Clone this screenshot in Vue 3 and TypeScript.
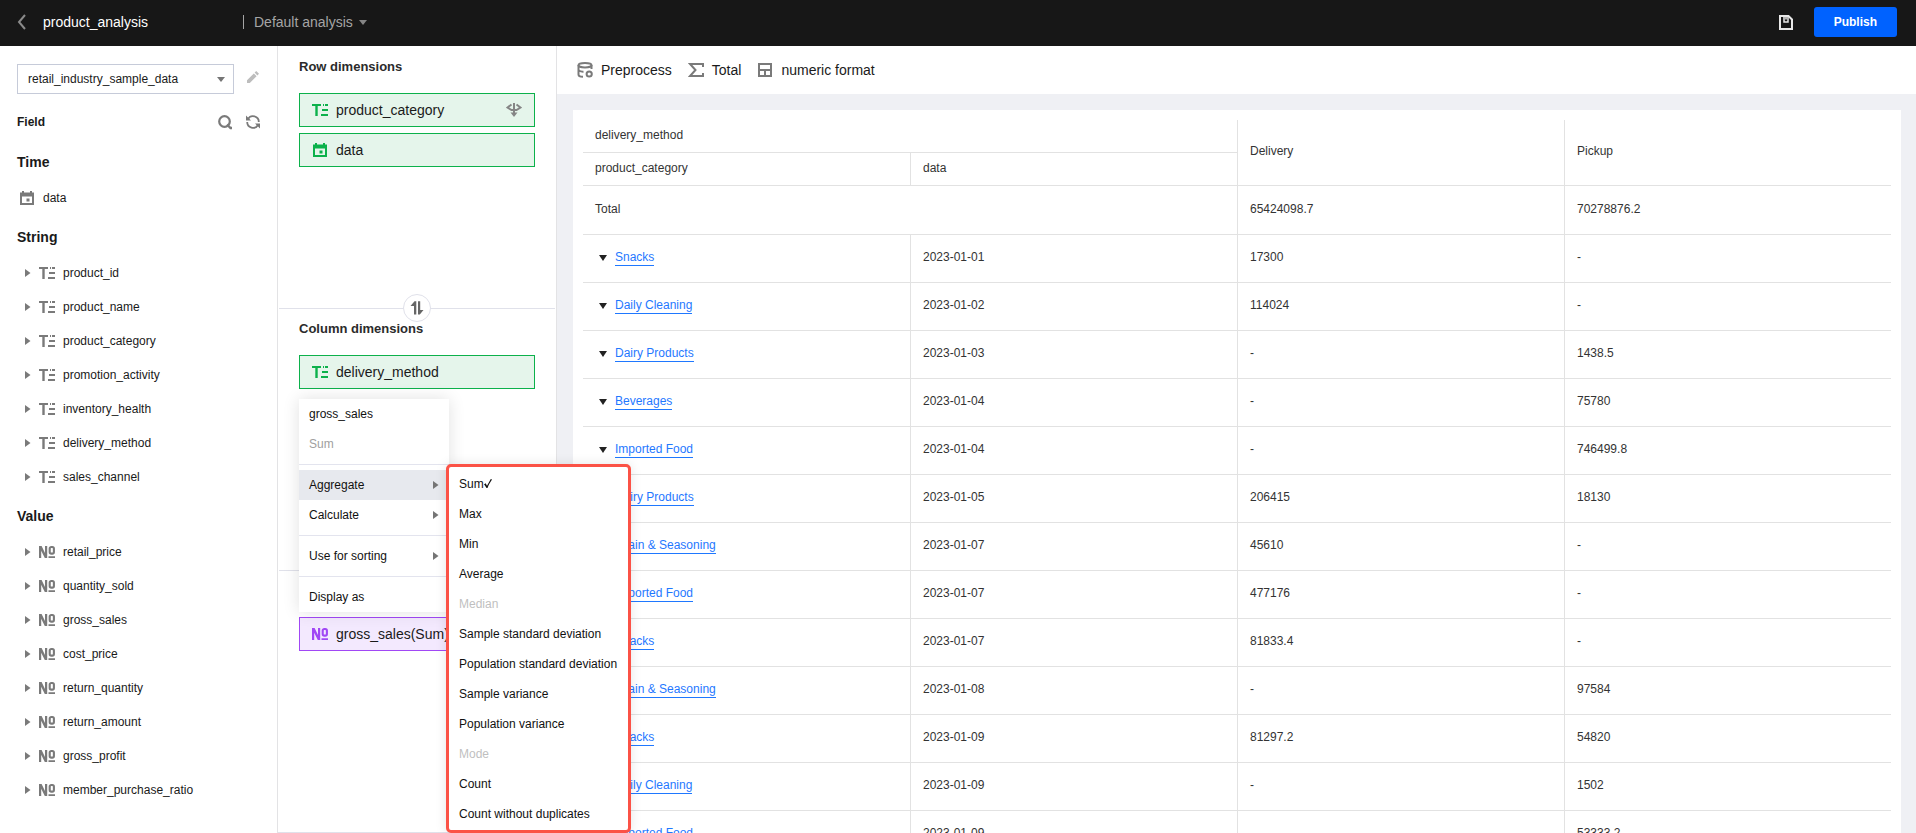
<script setup lang="ts">
import { ref } from 'vue'

interface Row {
  category: string
  date: string
  delivery: string
  pickup: string
}

interface Aggregate {
  label: string
  disabled?: boolean
}

const dataset = ref('retail_industry_sample_data')

const stringFields: string[] = [
  'product_id',
  'product_name',
  'product_category',
  'promotion_activity',
  'inventory_health',
  'delivery_method',
  'sales_channel',
]

const valueFields: string[] = [
  'retail_price',
  'quantity_sold',
  'gross_sales',
  'cost_price',
  'return_quantity',
  'return_amount',
  'gross_profit',
  'member_purchase_ratio',
]

const aggregates: Aggregate[] = [
  { label: 'Sum' },
  { label: 'Max' },
  { label: 'Min' },
  { label: 'Average' },
  { label: 'Median', disabled: true },
  { label: 'Sample standard deviation' },
  { label: 'Population standard deviation' },
  { label: 'Sample variance' },
  { label: 'Population variance' },
  { label: 'Mode', disabled: true },
  { label: 'Count' },
  { label: 'Count without duplicates' },
]
const selected = ref('Sum')

const rows: Row[] = [
  { category: 'Snacks', date: '2023-01-01', delivery: '17300', pickup: '-' },
  { category: 'Daily Cleaning', date: '2023-01-02', delivery: '114024', pickup: '-' },
  { category: 'Dairy Products', date: '2023-01-03', delivery: '-', pickup: '1438.5' },
  { category: 'Beverages', date: '2023-01-04', delivery: '-', pickup: '75780' },
  { category: 'Imported Food', date: '2023-01-04', delivery: '-', pickup: '746499.8' },
  { category: 'Dairy Products', date: '2023-01-05', delivery: '206415', pickup: '18130' },
  { category: 'Grain & Seasoning', date: '2023-01-07', delivery: '45610', pickup: '-' },
  { category: 'Imported Food', date: '2023-01-07', delivery: '477176', pickup: '-' },
  { category: 'Snacks', date: '2023-01-07', delivery: '81833.4', pickup: '-' },
  { category: 'Grain & Seasoning', date: '2023-01-08', delivery: '-', pickup: '97584' },
  { category: 'Snacks', date: '2023-01-09', delivery: '81297.2', pickup: '54820' },
  { category: 'Daily Cleaning', date: '2023-01-09', delivery: '-', pickup: '1502' },
  { category: 'Imported Food', date: '2023-01-09', delivery: '-', pickup: '53333.2' },
]
</script>

<template>
  <div class="app">
    <svg class="sprite" aria-hidden="true">
      <symbol id="i-string" viewBox="0 0 16 16">
        <path d="M0 3h9M11 3h1M13 3h3M10 8h6M9 13h7" fill="none" stroke="currentColor" stroke-width="2" />
        <path d="M4.500 3v11" fill="none" stroke="currentColor" stroke-width="2.400" />
      </symbol>
      <symbol id="i-number" viewBox="0 0 16 16">
        <path d="M0 2h2.600L6 9V2h2.200v12H5.800L2.200 6.800V14H0zM9.500 12.200H16V14H9.500z" fill="currentColor" />
        <rect x="10.700" y="3" width="4.200" height="6.600" rx="1.600" fill="none" stroke="currentColor" stroke-width="2.100" />
      </symbol>
      <symbol id="i-date" viewBox="0 0 16 16">
        <path fill="currentColor" fill-rule="evenodd" d="M3 1h2v1.500h6V1h2v1.500h2V15H1V2.500h2zM3 6.500V13h10V6.500z" />
        <rect x="7.500" y="8.500" width="3" height="3" fill="currentColor" />
      </symbol>
      <symbol id="i-right" viewBox="0 0 6 10"><path d="M0 1l5.500 4L0 9z" fill="currentColor" /></symbol>
      <symbol id="i-down" viewBox="0 0 8 6"><path d="M0 0h8L4 6z" fill="currentColor" /></symbol>
    </svg>

    <header class="topbar">
      <button class="bare back" aria-label="Back">
        <svg width="10" height="16" viewBox="0 0 10 16"><path d="M8 1L2 8l6 7" fill="none" stroke="currentColor" stroke-width="2" /></svg>
      </button>
      <h1 class="title">product_analysis</h1>
      <button class="bare analysis">
        Default analysis
        <svg width="8" height="5" viewBox="0 0 8 5"><path d="M0 0h8L4 5z" fill="currentColor" /></svg>
      </button>
      <button class="bare save" aria-label="Save">
        <svg width="14" height="15" viewBox="0 0 14 15">
          <path d="M1 1h8.500L13 4.500V14H1z" fill="none" stroke="currentColor" stroke-width="2" />
          <path d="M5 1v6h4V1M7 1v3.500" fill="none" stroke="currentColor" stroke-width="1.500" />
        </svg>
      </button>
      <button class="publish">Publish</button>
    </header>

    <div class="body">
      <aside class="fields">
        <div class="source">
          <div class="select">
            <select v-model="dataset" aria-label="Dataset">
              <option>retail_industry_sample_data</option>
            </select>
            <svg width="8" height="5" viewBox="0 0 8 5"><path d="M0 0h8L4 5z" fill="currentColor" /></svg>
          </div>
          <button class="bare edit" aria-label="Edit dataset">
            <svg width="12" height="12" viewBox="0 0 12 12">
              <path d="M0 12V9.200L6.800 2.400l2.800 2.800L2.800 12zM7.600 1.600L9.200 0 12 2.800l-1.600 1.600z" fill="currentColor" />
            </svg>
          </button>
        </div>
        <div class="field-head">
          <h2>Field</h2>
          <button class="bare" aria-label="Search fields">
            <svg width="15" height="15" viewBox="0 0 15 15">
              <circle cx="6.500" cy="6.500" r="5.300" fill="none" stroke="currentColor" stroke-width="2.200" />
              <path d="M9 9.500l3.500 3.500h1.500" fill="none" stroke="currentColor" stroke-width="2.400" />
            </svg>
          </button>
          <button class="bare" aria-label="Refresh fields">
            <svg width="14" height="14" viewBox="0 0 14 14">
              <path d="M2 4A5.800 5.800 0 0 1 12.800 7M12 10A5.800 5.800 0 0 1 1.200 7" fill="none" stroke="currentColor" stroke-width="1.800" />
              <path d="M0 .5v5h5zM14 13.500v-5H9z" fill="currentColor" />
            </svg>
          </button>
        </div>

        <h3>Time</h3>
        <ul>
          <li class="date"><svg width="16" height="16"><use href="#i-date" /></svg>data</li>
        </ul>
        <h3>String</h3>
        <ul>
          <li v-for="f in stringFields" :key="f">
            <button class="bare caret" :aria-label="'Expand ' + f"><svg width="6" height="10"><use href="#i-right" /></svg></button>
            <svg width="16" height="16"><use href="#i-string" /></svg>{{ f }}
          </li>
        </ul>
        <h3>Value</h3>
        <ul>
          <li v-for="f in valueFields" :key="f">
            <button class="bare caret" :aria-label="'Expand ' + f"><svg width="6" height="10"><use href="#i-right" /></svg></button>
            <svg width="16" height="16"><use href="#i-number" /></svg>{{ f }}
          </li>
        </ul>
      </aside>

      <section class="shelves">
        <div class="shelf">
          <h2>Row dimensions</h2>
          <div class="chip">
            <svg width="16" height="16"><use href="#i-string" /></svg>product_category
            <svg class="drill" width="16" height="14" viewBox="0 0 16 14">
              <path d="M8 0v11M5.500 1.500L1.500 4.500 5.500 7h5l4-2.500-4-3" fill="none" stroke="currentColor" stroke-width="2" />
              <path d="M4.500 9.500h7L8 14z" fill="currentColor" />
            </svg>
          </div>
          <div class="chip">
            <svg width="16" height="16"><use href="#i-date" /></svg>data
          </div>
        </div>

        <div class="shelf">
          <button class="swap" aria-label="Swap rows and columns">
            <svg width="14" height="14" viewBox="0 0 14 14">
              <path d="M6.300 13.500H4V5H.5L4.500.3h1.800zM8 .3h2.200V9H13.500L9.800 13.500H8z" fill="currentColor" />
            </svg>
          </button>
          <h2>Column dimensions</h2>
          <div class="chip">
            <svg width="16" height="16"><use href="#i-string" /></svg>delivery_method
          </div>
        </div>

        <div class="shelf untitled">
          <div class="chip value">
            <svg width="16" height="16"><use href="#i-number" /></svg>gross_sales(Sum)
            <div class="menu" role="menu">
              <div class="item">gross_sales</div>
              <div class="item muted">Sum</div>
              <hr />
              <div class="parent">
                <button class="item active" role="menuitem" aria-haspopup="true" aria-expanded="true">
                  Aggregate<svg width="6" height="10"><use href="#i-right" /></svg>
                </button>
                <div class="submenu" role="menu" aria-label="Aggregate">
                  <button
                    v-for="a in aggregates"
                    :key="a.label"
                    class="item"
                    role="menuitemradio"
                    :aria-checked="selected === a.label"
                    :disabled="a.disabled"
                    @click="selected = a.label"
                  >
                    {{ a.label }}<svg v-if="selected === a.label" width="8" height="13" viewBox="0 0 8 13">
                      <path d="M0 6.500L1.600 5.300 3 7.800 6.800 1 8 1.500C6 4.500 4.500 7 3.500 10H2.500C2 9 1 7.500 0 6.500z" fill="currentColor" />
                    </svg>
                  </button>
                </div>
              </div>
              <button class="item" role="menuitem" aria-haspopup="true">
                Calculate<svg width="6" height="10"><use href="#i-right" /></svg>
              </button>
              <hr />
              <button class="item" role="menuitem" aria-haspopup="true">
                Use for sorting<svg width="6" height="10"><use href="#i-right" /></svg>
              </button>
              <hr />
              <button class="item" role="menuitem">Display as</button>
            </div>
          </div>
        </div>
      </section>

      <main class="result">
        <div class="toolbar">
          <button class="bare">
            <svg width="16" height="16" viewBox="0 0 16 16" fill="none" stroke="currentColor" stroke-width="2">
              <ellipse cx="8" cy="3.200" rx="6.500" ry="2.200" />
              <path d="M1.500 3v9.500c0 1.500 2 2.300 4.500 2.300M14.500 3v4M1.500 8c1 1.300 2.500 1.800 5 1.700" />
              <circle cx="12.200" cy="12" r="2.600" />
            </svg>
            Preprocess
          </button>
          <button class="bare">
            <svg width="16" height="14" viewBox="0 0 16 14" fill="none" stroke="currentColor" stroke-width="2">
              <path d="M15 4V1H2l5.500 6L2 13h13v-3" />
            </svg>
            Total
          </button>
          <button class="bare">
            <svg width="16" height="14" viewBox="-1 0 16 14" fill="none" stroke="currentColor" stroke-width="2">
              <path d="M1 1h12v12H1zM1 7h12M7 7v6" />
            </svg>
            numeric format
          </button>
        </div>
        <div class="canvas">
          <div class="card">
            <table>
              <thead>
                <tr>
                  <th colspan="2">delivery_method</th>
                  <th rowspan="2">Delivery</th>
                  <th rowspan="2">Pickup</th>
                </tr>
                <tr>
                  <th>product_category</th>
                  <th>data</th>
                </tr>
              </thead>
              <tbody>
                <tr class="total">
                  <td colspan="2">Total</td>
                  <td>65424098.7</td>
                  <td>70278876.2</td>
                </tr>
                <tr v-for="(r, i) in rows" :key="i">
                  <td>
                    <div class="category">
                      <button class="bare" :aria-label="'Collapse ' + r.category"><svg width="8" height="6"><use href="#i-down" /></svg></button>
                      <a href="#">{{ r.category }}</a>
                    </div>
                  </td>
                  <td>{{ r.date }}</td>
                  <td>{{ r.delivery }}</td>
                  <td>{{ r.pickup }}</td>
                </tr>
              </tbody>
            </table>
          </div>
        </div>
      </main>
    </div>
  </div>
</template>

<style>
body {
  margin: 0;
}
</style>

<style scoped>
.app {
  display: flex;
  flex-direction: column;
  height: 100vh;
  overflow: hidden;
  background: #fff;
  color: #1a1a1a;
  font: 12px/18px 'Liberation Sans', Arial, sans-serif;
}
.sprite {
  position: absolute;
  width: 0;
  height: 0;
}
svg {
  display: block;
  flex: none;
}
h1, h2, h3, ul {
  margin: 0;
  padding: 0;
}
ul {
  list-style: none;
}
button {
  font: inherit;
  color: inherit;
  cursor: pointer;
}
.bare {
  display: flex;
  align-items: center;
  padding: 0;
  border: 0;
  background: none;
}

/* top bar */
.topbar {
  display: flex;
  flex: none;
  align-items: center;
  box-sizing: border-box;
  height: 46px;
  padding: 0 19px 2px 17px;
  background: #171717;
  color: #fff;
}
.back {
  color: #8a8a8a;
}
.title {
  width: 200px;
  margin-left: 16px;
  font-size: 14px;
  font-weight: 400;
}
.analysis {
  gap: 6px;
  height: 14px;
  padding-left: 10px;
  border-left: 1px solid #a5a5a5;
  color: #a5a5a5;
  font-size: 14px;
}
.analysis svg {
  color: #858585;
}
.save {
  margin-left: auto;
  color: #e8e8e8;
}
.publish {
  height: 30px;
  margin: 0 0 0 21px;
  padding: 0 20px;
  border: 0;
  border-radius: 3px;
  background: #0062ff;
  color: #fff;
  font-weight: 700;
}

.body {
  display: flex;
  flex: 1;
  min-height: 0;
}

/* field list */
.fields {
  flex: none;
  box-sizing: border-box;
  width: 278px;
  padding: 18px 17px 0;
  border-right: 1px solid #e3e3e5;
}
.source {
  display: flex;
  gap: 13px;
}
.select {
  display: grid;
  align-items: center;
  width: 217px;
}
.select select,
.select svg {
  grid-area: 1 / 1;
}
.select select {
  appearance: none;
  height: 30px;
  padding: 0 10px;
  border: 1px solid #c6cbd9;
  border-radius: 0;
  background: #fff;
  color: #1a1a1a;
  font: inherit;
}
.select svg {
  justify-self: end;
  margin-right: 9px;
  color: #757575;
  pointer-events: none;
}
.edit {
  height: 26px;
  color: #bdbdbd;
}
.field-head {
  display: flex;
  align-items: center;
  gap: 13px;
  height: 24px;
  margin: 16px 0 6px;
  color: #7a7a7a;
}
.field-head h2 {
  width: 188px;
  color: #1a1a1a;
  font-size: 12px;
}
.fields h3 {
  box-sizing: border-box;
  height: 41px;
  padding-top: 2px;
  font-size: 14px;
  line-height: 40px;
}
.fields li {
  display: flex;
  align-items: center;
  height: 34px;
  padding-left: 8px;
}
.fields li svg {
  color: #7a7a7a;
}
.fields li > svg {
  margin-right: 8px;
}
.fields li.date {
  padding-left: 2px;
}
.caret {
  margin-right: 8px;
}

/* shelves */
.shelves {
  display: grid;
  flex: none;
  grid-template-rows: repeat(3, 1fr);
  box-sizing: border-box;
  width: 279px;
  border-right: 1px solid #e3e3e5;
  border-bottom: 1px solid #e0e1ea;
}
.shelf {
  position: relative;
  margin: 0 1px;
  padding: 11px 20px 0;
  border-top: 1px solid #e0e1ea;
}
.shelf:first-child {
  border-color: transparent;
}
.shelf.untitled {
  padding-top: 46px;
}
.shelf h2 {
  margin-bottom: 17px;
  color: #2b2b2b;
  font-size: 13px;
}
.chip {
  position: relative;
  display: flex;
  align-items: center;
  gap: 8px;
  box-sizing: border-box;
  height: 34px;
  margin-bottom: 6px;
  padding: 0 12px;
  border: 1px solid #0cb14b;
  background: #e5f5eb;
  font-size: 14px;
}
.chip > svg {
  color: #0cb14b;
}
.chip > .drill {
  margin-left: auto;
  color: #858585;
}
.chip.value {
  border-color: #a148f5;
  background: #f3e9fe;
}
.chip.value > svg {
  color: #a148f5;
}
.swap {
  position: absolute;
  top: -15px;
  left: calc(50% - 14px);
  display: grid;
  place-items: center;
  width: 28px;
  height: 28px;
  padding: 0;
  border: 1px solid #e0e1ea;
  border-radius: 50%;
  background: #fff;
  color: #666;
}

/* menus */
.menu {
  position: absolute;
  bottom: 38px;
  left: -1px;
  z-index: 2;
  width: 150px;
  background: #fff;
  box-shadow: 0 0 16px rgba(0, 0, 0, 0.12);
  color: #111;
  font-size: 12px;
}
.menu hr {
  height: 1px;
  margin: 5px 0;
  border: 0;
  background: #e3e4ee;
}
.parent {
  position: relative;
}
.item {
  display: flex;
  align-items: center;
  box-sizing: border-box;
  width: 100%;
  height: 30px;
  padding: 0 10px;
  border: 0;
  background: none;
  white-space: nowrap;
}
.menu > .item svg,
.parent > .item svg {
  margin-left: auto;
  color: #757575;
}
.item.muted {
  color: #a0a0a0;
}
.item.active {
  background: #e7e9ee;
}
.submenu {
  position: absolute;
  top: -6px;
  left: 147px;
  box-sizing: border-box;
  width: 185px;
  padding: 2px 0 1px;
  border: 3px solid #fb5246;
  border-radius: 5px;
  background: #fff;
  box-shadow: 0 0 12px rgba(0, 0, 0, 0.1);
}
.submenu .item:disabled {
  color: #bfbfbf;
}

/* result table */
.result {
  display: flex;
  flex: 1;
  flex-direction: column;
  min-width: 0;
}
.toolbar {
  display: flex;
  flex: none;
  align-items: center;
  gap: 16px;
  height: 48px;
  padding-left: 20px;
  font-size: 14px;
}
.toolbar button {
  gap: 8px;
}
.toolbar svg {
  color: #7a7a7a;
}
.canvas {
  flex: 1;
  min-height: 0;
  padding: 16px 15px 0 16px;
  overflow: hidden;
  background: #eff0f4;
}
.card {
  padding: 10px 10px 0;
  background: #fff;
}
table {
  width: 100%;
  border-spacing: 0;
  table-layout: fixed;
  color: #333;
}
th,
td {
  box-sizing: border-box;
  height: 48px;
  padding: 0 12px 3px;
  border-bottom: 1px solid #e2e2e2;
  font-weight: 400;
  text-align: left;
}
th {
  height: 33px;
}
.total td {
  height: 49px;
}
th + th,
td + td {
  border-left: 1px solid #e2e2e2;
}
.category {
  display: flex;
  align-items: center;
  gap: 8px;
  padding-left: 4px;
}
.category button {
  padding-top: 2px;
  color: #222;
}
.category a {
  border-bottom: 1px solid #1f78ff;
  color: #1f78ff;
  line-height: 16px;
  text-decoration: none;
}
</style>
